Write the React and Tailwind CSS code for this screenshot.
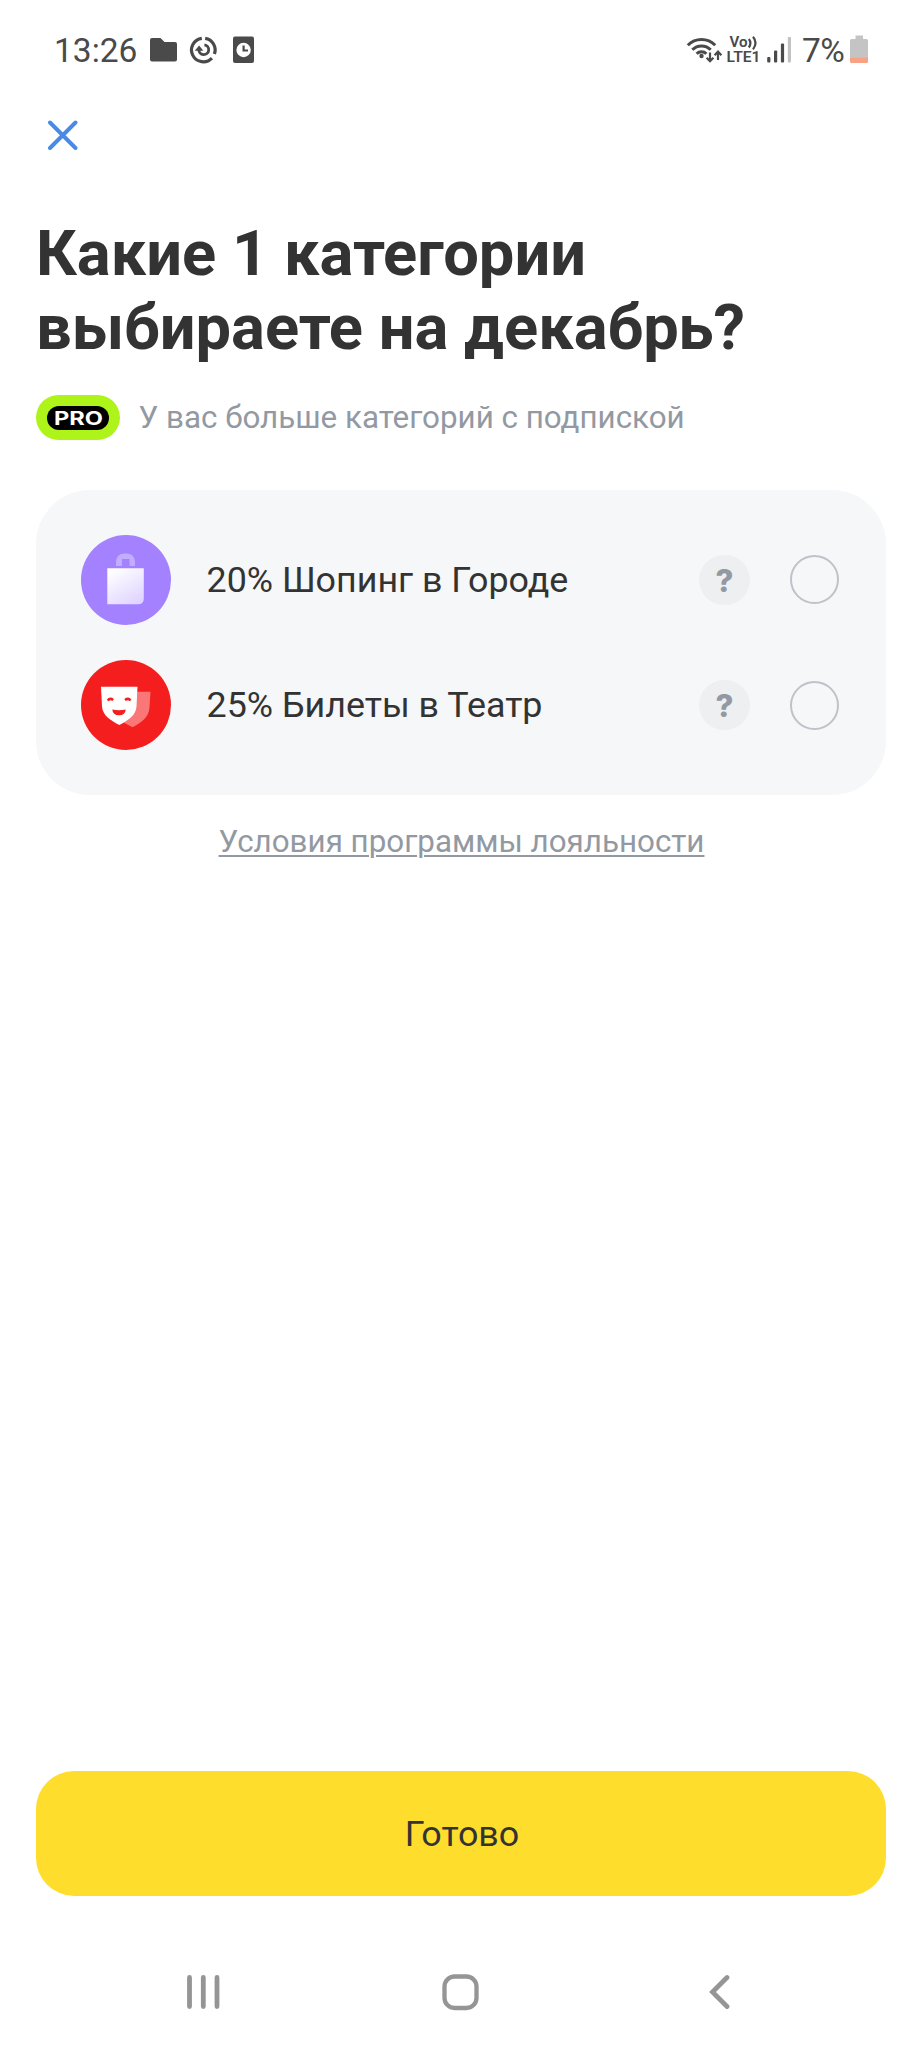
const items = [
  { id: 'shop', label: '20% Шопинг в Городе', Icon: BagIcon },
  { id: 'theatre', label: '25% Билеты в Театр', Icon: MasksIcon },
];

function NotificationIcons() {
  return (
    <svg width="106" height="30" viewBox="0 0 106 30" fill="#4a4a4a">
      {/* folder */}
      <path d="M2 3h8.500l4 4H25a2 2 0 0 1 2 2v15.500a2 2 0 0 1-2 2H2a2 2 0 0 1-2-2V5a2 2 0 0 1 2-2z" />
      {/* data usage ring */}
      <g fill="none" stroke="#4a4a4a" strokeWidth="3.200">
        <path d="M51.800 3.300A11.800 11.800 0 1 0 61.900 23.100" />
        <path d="M55.200 3.300A11.800 11.800 0 0 1 64.400 19" />
        <path d="M54.400 9.900A4.900 4.900 0 1 1 48.900 14.500" strokeWidth="2.800" />
      </g>
      <path d="M44.800 15.800h8.600l-4.300-5.200z" />
      {/* file with clock */}
      <path d="M85 1.500h17a2 2 0 0 1 2 2v22.500a2 2 0 0 1-2 2H85a2 2 0 0 1-2-2V3.500a2 2 0 0 1 2-2z" />
      <circle cx="93.600" cy="15" r="7.200" fill="#fff" />
      <path d="M93.600 10.500v5h4.400" fill="none" stroke="#4a4a4a" strokeWidth="2.200" />
    </svg>
  );
}

function WifiIcon() {
  return (
    <svg width="38" height="30" viewBox="0 0 38 30" fill="none" stroke="#4a4a4a" strokeWidth="3">
      <path d="M1.800 10.200a19.300 19.300 0 0 1 27.400 0" />
      <path d="M6.300 14.700a13 13 0 0 1 18.400 0" />
      <path d="M10.600 18.800a7 7 0 0 1 9.800 0" />
      <circle cx="15.500" cy="21" r="2.200" fill="#4a4a4a" stroke="none" />
      <path d="M24 17.500v8.500M20.600 22.700l3.400 3.500l3.400-3.500M32 25V17M28.600 20.200l3.400-3.500l3.400 3.500" strokeWidth="2.200" />
    </svg>
  );
}

function VolteIcon() {
  return (
    <svg className="-my-1.5" width="36" height="42" viewBox="-1 -6 36 42">
      <g fill="#4a4a4a" fontFamily="Roboto, sans-serif" fontWeight="600" fontSize="14.500">
        <text x="2.500" y="12" textLength="18" lengthAdjust="spacingAndGlyphs">Vo</text>
        <text x="-0.500" y="27.200" textLength="34" lengthAdjust="spacingAndGlyphs">LTE1</text>
      </g>
      <path d="M21.800 4q3.200 4 0 8.500M26 1.800q5 6 0 12.500" fill="none" stroke="#4a4a4a" strokeWidth="2.200" />
    </svg>
  );
}

function SignalIcon() {
  return (
    <svg width="25" height="30" viewBox="0 0 25 30" fill="#4a4a4a">
      <rect x="0.200" y="22" width="3.200" height="5.500" rx="1" />
      <rect x="7" y="15.500" width="3.200" height="12" rx="1" />
      <rect x="13.900" y="8.500" width="3.200" height="19" rx="1" />
      <rect x="20.800" y="2" width="3.200" height="25.500" rx="1" fill="#c2c2c2" />
    </svg>
  );
}

function BatteryIcon() {
  return (
    <svg width="18" height="30" viewBox="0 0 18 30">
      <path d="M5.500 0.500h7.500v3.500h3.500a1.500 1.500 0 0 1 1.500 1.500V23H0V5.500A1.500 1.500 0 0 1 1.500 4h4z" fill="#c4c4c4" />
      <path d="M0 22.800h18v3.700a1.500 1.500 0 0 1-1.500 1.500h-15A1.500 1.500 0 0 1 0 26.500z" fill="#f9a184" />
    </svg>
  );
}

function StatusBar() {
  return (
    <header className="flex h-[100px] items-center justify-between pl-[54px] pr-[54px] text-[#4a4a4a]">
      <div className="flex items-center">
        <span className="w-[96px] pt-0.5 text-[33.500px] leading-none">13:26</span>
        <NotificationIcons />
      </div>
      <div className="flex items-center">
        <WifiIcon />
        <span className="ml-[2px] flex"><VolteIcon /></span>
        <span className="ml-[5px] flex"><SignalIcon /></span>
        <span className="ml-[10.500px] w-[48px] pt-0.5 text-[33.500px] leading-10 tracking-[-0.5px]">7%</span>
        <BatteryIcon />
      </div>
    </header>
  );
}

function BagIcon() {
  return (
    <svg width="90" height="90" viewBox="0 0 90 90">
      <defs>
        <linearGradient id="bag" x1="0.2" y1="0" x2="0.8" y2="1">
          <stop offset="0" stopColor="#fff" />
          <stop offset="1" stopColor="#dfd3ff" />
        </linearGradient>
      </defs>
      <circle cx="45" cy="45" r="45" fill="#a381ff" />
      <path d="M35 31v-4.500a8 8 0 0 1 8-8h3a8 8 0 0 1 8 8V31h-5.500v-7h-7.500v7z" fill="#c2adff" />
      <path d="M26.300 33.300h36.500V63.500q0 5.800-5.800 5.800H26.300z" fill="url(#bag)" />
    </svg>
  );
}

function MasksIcon() {
  return (
    <svg width="90" height="90" viewBox="0 0 90 90">
      <circle cx="45" cy="45" r="45" fill="#f41e1e" />
      <path d="M54 31.700h15.500l-1 15.500c-.5 10-8 15.300-17 20l-8.500-4.500z" fill="#f97777" />
      <path d="M20 26.700h36.500l-1 19.500c-.5 9-8 14-17.200 18.700c-9.200-4.700-16.800-9.700-17.300-18.700z" fill="#fff" />
      <path d="M31.300 49.500q6.700 1.600 13.400 0q-.4 5.800-6.700 5.800t-6.700-5.800z" fill="#f41e1e" />
      <path d="M26.800 40.600q1.800-3.200 5.400-.6M44 40q3.600-2.600 5.400.6" fill="none" stroke="#f41e1e" strokeWidth="2.600" />
    </svg>
  );
}

function ProBadge() {
  return (
    <span className="flex h-[45px] w-[84px] items-center justify-center rounded-full bg-[#aef31a]">
      <span className="flex h-6 w-[62px] items-center justify-center rounded-full bg-black">
        <svg width="52" height="24" viewBox="0 0 52 24">
          <text x="2" y="18.500" textLength="49" lengthAdjust="spacingAndGlyphs" fill="#fff" fontFamily="Inter, sans-serif" fontWeight="700" fontSize="18.200">PRO</text>
        </svg>
      </span>
    </span>
  );
}

function CategoryRow({ label, Icon }) {
  return (
    <li className="flex h-[90px] items-center">
      <Icon />
      <span className="ml-[35.500px] flex-1 pt-0.5 text-[35.850px]">{label}</span>
      <button className="mr-[39.500px] flex h-[50.500px] w-[51px] items-center justify-center rounded-full bg-[#eeeff1] pt-px font-['Inter',sans-serif] text-[31px] font-extrabold leading-none text-[#9299a2]">?</button>
      <span className="size-[49px] rounded-full border-2 border-[#c0c2c9]" />
    </li>
  );
}

function NavBar() {
  return (
    <nav className="flex h-[38px] items-center justify-between pl-[187px] pr-[192.500px]">
      <svg width="33" height="36" viewBox="0 0 33 36" stroke="#959595" strokeWidth="4.800" strokeLinecap="round">
        <path d="M2.500 3.500v29M16.300 3.500v29M30 3.500v29" />
      </svg>
      <svg className="mr-[7px]" width="37" height="37" viewBox="0 0 37 37">
        <rect x="2.500" y="2.500" width="32" height="31.500" rx="10" fill="none" stroke="#959595" strokeWidth="4.300" />
      </svg>
      <svg width="21" height="36" viewBox="0 0 21 36" fill="none" stroke="#959595" strokeWidth="4.800" strokeLinecap="round">
        <path d="M18 3.500L3.500 18L18 32.500" />
      </svg>
    </nav>
  );
}

export default function App() {
  return (
    <div className="flex h-[2048px] w-[922px] flex-col bg-white font-['Roboto',sans-serif] text-[#333]">
      <StatusBar />
      <main className="flex flex-1 flex-col px-9">
        <button className="ml-[11px] mt-5 size-8">
          <svg width="32" height="32" viewBox="0 0 32 32" stroke="#4a89e8" strokeWidth="3.900" strokeLinecap="round">
            <path d="M3 2.500L28.500 28M28.500 2.500L3 28" />
          </svg>
        </button>
        <h1 className="mt-[64px] text-[63.250px] font-bold leading-[74px]">Какие 1 категории<br />выбираете на декабрь?</h1>
        <div className="mt-[31px] flex h-[45px] items-center gap-[18.500px]">
          <ProBadge />
          <span className="text-[31.350px] text-[#9299a2]">У вас больше категорий с подпиской</span>
        </div>
        <ul className="mt-[50px] flex flex-col gap-[35.300px] rounded-[54px] bg-[#f6f7f9] py-[44.850px] pl-[45px] pr-[47.500px]">
          {items.map((item) => (
            <CategoryRow key={item.id} {...item} />
          ))}
        </ul>
        <a className="ml-px mt-[25px] self-center text-[31.350px] leading-[44px] text-[#9299a2] underline decoration-[1.500px] underline-offset-[3px]">Условия программы лояльности</a>
        <button className="mb-[77px] mt-auto h-[125px] rounded-[38px] bg-[#ffdd2d] pl-[2px] pt-0.5 text-[35.850px]">Готово</button>
      </main>
      <div className="h-[75px]">
        <NavBar />
      </div>
    </div>
  );
}
